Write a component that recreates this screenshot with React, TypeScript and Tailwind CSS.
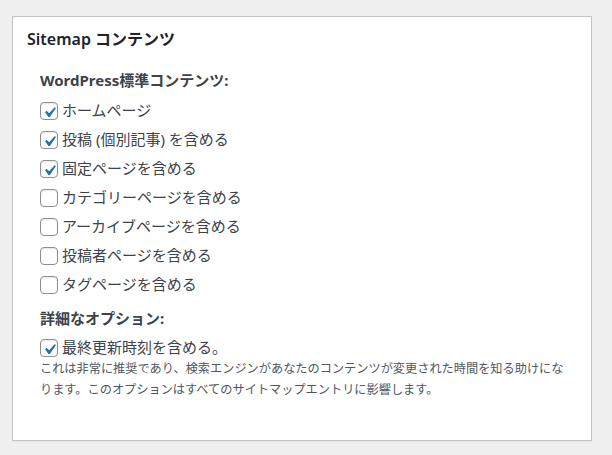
import React from 'react';

const items = [
  { label: 'ホームページ', checked: true },
  { label: '投稿 (個別記事) を含める', checked: true },
  { label: '固定ページを含める', checked: true },
  { label: 'カテゴリーページを含める', checked: false },
  { label: 'アーカイブページを含める', checked: false },
  { label: '投稿者ページを含める', checked: false },
  { label: 'タグページを含める', checked: false },
];

const Check: React.FC<{ checked: boolean }> = ({ checked }) => (
  <span className="relative w-[18px] h-[18px] shrink-0 rounded-[4px] border border-[#8c8f94] bg-white shadow-[inset_0_1px_2px_rgba(0,0,0,0.1)]">
    {checked && (
      <svg viewBox="0 0 20 20" className="absolute -left-[2px] -top-[1px] w-[21px] h-[21px]">
        <path d="M14.83 4.89l1.34.94-5.81 8.38H9.02L5.78 9.67l1.34-1.25 2.57 2.4z" fill="#2271b1" />
      </svg>
    )}
  </span>
);

const Row: React.FC<{ label: string; checked: boolean }> = ({ label, checked }) => (
  <label className="flex items-center gap-[4px] h-[29px]">
    <Check checked={checked} />
    <span className="text-[15px] text-[#3c434a]">{label}</span>
  </label>
);

export default function App() {
  return (
    <div className="w-[612px] h-[455px] bg-[#f0f0f1] pt-[16px] pl-[12px] font-['Noto_Sans','Noto_Sans_CJK_JP',sans-serif]">
      <div className="w-[580px] h-[425px] bg-white border border-[#c3c4c7] shadow-[0_1px_1px_rgba(0,0,0,0.04)]">
        <h2 className="px-[14px] pt-[8px] text-[16px] font-semibold text-[#1d2327] leading-[28px]">Sitemap コンテンツ</h2>
        <div className="px-[27px] pt-[11px]">
          <h3 className="text-[15px] font-bold text-[#3c434a] leading-[32px]">WordPress標準コンテンツ:</h3>
          <div className="flex flex-col">
            {items.map((it) => (
              <Row key={it.label} label={it.label} checked={it.checked} />
            ))}
          </div>
          <h3 className="mt-[4px] text-[15px] font-bold text-[#3c434a] leading-[30px]">詳細なオプション:</h3>
          <Row label="最終更新時刻を含める。" checked={true} />
          <p className="-mt-[4px] text-[12.2px] text-[#50575e] leading-[21px]">
            これは非常に推奨であり、検索エンジンがあなたのコンテンツが変更された時間を知る助けになります。このオプションはすべてのサイトマップエントリに影響します。
          </p>
        </div>
      </div>
    </div>
  );
}
